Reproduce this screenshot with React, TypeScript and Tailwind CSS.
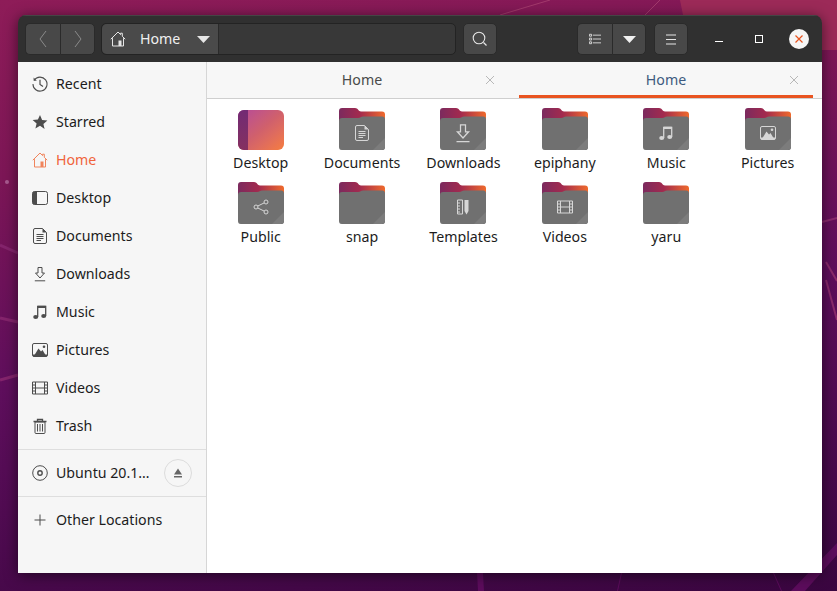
import React from "react";

const S = ({ size = 16, children, className = "" }: { size?: number; children: React.ReactNode; className?: string }) => (
  <svg width={size} height={size} viewBox="0 0 16 16" fill="none" className={`shrink-0 ${className}`}>{children}</svg>
);

const HomeIcon = ({ c }: { c: string }) => (
  <S><path d="M.8 8.2 8 1l2.6 2.6V2.2h1.7v3.1l2.9 2.9M2.5 7.2v7.8h11V7.2" stroke={c} strokeWidth="1" /><path d="M8.5 9.5h3V15h-3z" fill={c} /></S>
);
const RecentIcon = () => (
  <S><path d="M2.2 4.2A7 7 0 1 1 1 8" stroke="#4d4d4d" strokeWidth="1.1" /><path d="M1.6 1.6v3.2h3.2" fill="#4d4d4d" /><path d="M8 3.8V8.4l3 2.2" stroke="#4d4d4d" strokeWidth="1.2" /></S>
);
const StarIcon = () => (
  <S><path d="m8 1 2.1 4.9 5.3.5-4 3.5 1.2 5.2L8 11.8l-4.6 2.8 1.2-5.2-4-3.5 5.3-.5z" fill="#4d4d4d" /></S>
);
const DesktopIcon = () => (
  <S><rect x=".5" y="1.5" width="15" height="13" rx="2" stroke="#4d4d4d" /><path d="M2.5 1.5H5v13H2.5a2 2 0 0 1-2-2v-9a2 2 0 0 1 2-2z" fill="#4d4d4d" /></S>
);
const DocIcon = ({ c = "#4d4d4d" }: { c?: string }) => (
  <S><path d="M1.500 2A1.500 1.500 0 0 1 3 .5h7.500l4 4V14a1.500 1.500 0 0 1-1.500 1.500H3A1.500 1.500 0 0 1 1.500 14z" stroke={c} /><path d="M4.500 6.500h7M4.500 8.500h7M4.500 10.500h7M4.500 12.500h4.500" stroke={c} /><path d="M10.500 .5v4h4" fill={c} /></S>
);
const DownIcon = ({ c = "#4d4d4d", size = 16 }: { c?: string; size?: number }) => (
  <S size={size}><path d="M6 1.500h4V7h2.500L8 12 3.500 7H6z" stroke={c} /><path d="M2.800 14.800h10.400" stroke={c} /></S>
);
const MusicIcon = ({ c = "#4d4d4d" }: { c?: string }) => (
  <S><path d="M5.700 13V2.500h8V12" stroke={c} strokeWidth="1.300" /><path d="M5.700 1.800h8V4h-8z" fill={c} /><ellipse cx="3.700" cy="13" rx="2.500" ry="2" fill={c} /><ellipse cx="11.700" cy="12" rx="2.500" ry="2" fill={c} /></S>
);
const PicIcon = ({ c = "#4d4d4d" }: { c?: string }) => (
  <S><rect x=".5" y="1.500" width="15" height="13" rx="1.500" stroke={c} /><path d="M2.500 13 6.500 6.500l2.500 3 1.500-1.500 3 5z" fill={c} /><circle cx="12" cy="4.800" r="1.300" fill={c} /><path d="M1 12.500h14V14.500H1z" fill={c} /></S>
);
const FilmIcon = ({ c = "#4d4d4d" }: { c?: string }) => (
  <S><path d="M.5 2h15v12H.5zM3.500 2v12M12.500 2v12M3.500 8h9M.5 5h3M.5 8h3M.5 11h3M12.500 5h3M12.500 8h3M12.500 11h3" stroke={c} /></S>
);
const TrashIcon = () => (
  <S><path d="M1.500 3.500h13M5.500 3.500V1.500h5v2" stroke="#4d4d4d" strokeWidth="1.300" /><path d="M3 4h10v10.500a1 1 0 0 1-1 1H4a1 1 0 0 1-1-1z" stroke="#4d4d4d" /><path d="M5.500 6v7.500M8 6v7.500M10.500 6v7.500" stroke="#4d4d4d" /></S>
);
const DiscIcon = () => (
  <S><circle cx="8" cy="8" r="7.300" stroke="#4d4d4d" /><circle cx="8" cy="8" r="2.200" stroke="#4d4d4d" strokeWidth="1.400" /></S>
);
const PlusIcon = () => (
  <S><path d="M8 2.500v11M2.500 8h11" stroke="#4d4d4d" /></S>
);
const ShareIcon = () => (
  <S><circle cx="3" cy="8" r="2" stroke="#d6d6d6" /><circle cx="13" cy="3" r="2" stroke="#d6d6d6" /><circle cx="13" cy="13" r="2" stroke="#d6d6d6" /><path d="m4.800 7 6.400-3.100M4.800 9l6.400 3.100" stroke="#d6d6d6" /></S>
);
const TemplIcon = () => (
  <S><path d="M2.500 1h5v14h-5zM2.500 4H5M2.500 7H5M2.500 10H5M2.500 13H5" stroke="#d6d6d6" /><path d="M9.500 1h4v11l-2 3.500-2-3.500z" fill="#d6d6d6" /></S>
);

const sidebar: { n: string; i: React.ReactNode; active?: boolean }[] = [
  { n: "Recent", i: <RecentIcon /> },
  { n: "Starred", i: <StarIcon /> },
  { n: "Home", i: <HomeIcon c="#f0845c" />, active: true },
  { n: "Desktop", i: <DesktopIcon /> },
  { n: "Documents", i: <DocIcon /> },
  { n: "Downloads", i: <DownIcon /> },
  { n: "Music", i: <MusicIcon /> },
  { n: "Pictures", i: <PicIcon /> },
  { n: "Videos", i: <FilmIcon /> },
  { n: "Trash", i: <TrashIcon /> },
];

const Folder = ({ id, glyph, tall }: { id: string; glyph?: React.ReactNode; tall?: boolean }) => (
  <div className="relative h-[42px] w-[46px]">
    <svg width="46" height="42" viewBox="0 0 46 42" className="block">
      <defs>
        <linearGradient id={id} x1="0" y1="0" x2="1" y2="0">
          <stop offset="0" stopColor="#7b2a5e" />
          <stop offset="0.45" stopColor="#a32a4e" />
          <stop offset="1" stopColor="#ef6a2c" />
        </linearGradient>
      </defs>
      <path d="M0 20V3a3 3 0 0 1 3-3h13c3 0 3.500 3.500 6 3.500H43a3 3 0 0 1 3 3V20z" fill={`url(#${id})`} />
      <path d="M0 39V13a3 3 0 0 1 3-3h16c2.500 0 3-1.500 5-1.500h19a3 3 0 0 1 3 3V39a3 3 0 0 1-3 3H3a3 3 0 0 1-3-3z" fill="#707070" />
      <path d="M46 30 34 42h9a3 3 0 0 0 3-3z" fill="#7c7c7c" />
      <path d="M0 39a3 3 0 0 0 3 3h40a3 3 0 0 0 3-3v.500a2.500 2.500 0 0 1-3 2.500H3a2.500 2.500 0 0 1-3-2.500z" fill="#5c5c5c" />
    </svg>
    {glyph && <div className={`absolute inset-x-0 flex justify-center ${tall ? "top-[15px]" : "top-[17px]"}`}>{glyph}</div>}
  </div>
);

const DesktopFolder = () => (
  <div className="mt-[2px] flex h-[40px] w-[46px] overflow-hidden rounded-[6px] bg-gradient-to-br from-[#b5489a] via-[#d0606c] to-[#f67d3c]">
    <div className="h-full w-[10px] bg-gradient-to-b from-[#722a74] to-[#853060]" />
  </div>
);

const g = "#d6d6d6";
const files: { n: string; glyph?: React.ReactNode; desktop?: boolean; tall?: boolean }[] = [
  { n: "Desktop", desktop: true },
  { n: "Documents", glyph: <DocIcon c={g} /> },
  { n: "Downloads", glyph: <DownIcon c={g} size={20} />, tall: true },
  { n: "epiphany" },
  { n: "Music", glyph: <MusicIcon c={g} /> },
  { n: "Pictures", glyph: <PicIcon c={g} /> },
  { n: "Public", glyph: <ShareIcon /> },
  { n: "snap" },
  { n: "Templates", glyph: <TemplIcon /> },
  { n: "Videos", glyph: <FilmIcon c={g} /> },
  { n: "yaru" },
];

const Tab = ({ active }: { active?: boolean }) => (
  <div className={`relative flex h-[36px] w-[294px] items-center justify-center ${active ? "border-b-[3px] border-[#e95420] pt-[3px]" : ""}`}>
    <span className={`text-[14.2px] ${active ? "text-[#3d5a80]" : "text-[#4a4a4a]"}`}>Home</span>
    <svg width="10" height="10" viewBox="0 0 10 10" className="absolute right-[14px] top-[13px]">
      <path d="m1 1 8 8M9 1 1 9" stroke="#b8b8b8" />
    </svg>
  </div>
);

const btn = "flex h-[32px] items-center justify-center border border-[#2a2a2a] bg-[#484848]";

export default function App() {
  return (
    <div
      className="relative h-[591px] w-[837px] overflow-hidden bg-[linear-gradient(172deg,#8e1c58_0%,#7c1656_25%,#5e0e5c_55%,#3a0640_100%)] pl-[18px] pt-[15px]"
      style={{ fontFamily: '"Noto Sans", sans-serif' }}
    >
      <svg width="837" height="591" viewBox="0 0 837 591" className="absolute inset-0">
        <path d="M680 0h157v50H690z" fill="#9c2a58" />
        <path d="M620 40 660 0M500 15 550 0" stroke="#a23a6c" />
        <path d="M0 245 18 253M0 318 18 322M0 380 18 375" stroke="#84246c" strokeWidth="3" />
        <circle cx="7" cy="182" r="2" fill="#a85a90" />
        <path d="M477 573h6l1 18h-6zM621 573h1l-4 18h-1zM773 573h1l8 18h-1zM837 543v12l-32 36h-14z" fill="#5c0c5c" />
        <path d="M822 222 837 218M826 262 837 281M826 280 837 320" stroke="#8a2a6c" strokeWidth="2" />
      </svg>
      <div className="relative flex h-[558px] w-[804px] flex-col overflow-hidden rounded-t-[8px] shadow-[0_2px_14px_rgba(0,0,0,0.55)]">
        <header className="flex h-[47px] items-center border-t border-[#454545] bg-[#303030] pl-[7px]">
          <div className="flex">
            <div className={`${btn} w-[35px] rounded-l-[5px] border-r-0`}>
              <svg width="10" height="18" viewBox="0 0 10 18"><path d="M8 1 2 9l6 8" stroke="#8a8a8a" fill="none" /></svg>
            </div>
            <div className={`${btn} w-[35px] rounded-r-[5px]`}>
              <svg width="10" height="18" viewBox="0 0 10 18"><path d="m2 1 6 8-6 8" stroke="#8a8a8a" fill="none" /></svg>
            </div>
          </div>
          <div className="ml-[6px] flex h-[32px] w-[355px] rounded-[5px] border border-[#232323] bg-[#383838]">
            <div className="flex w-[117px] items-center rounded-l-[5px] border-r border-[#2a2a2a] bg-[#4a4a4a] pl-[8px]">
              <HomeIcon c="#e6e6e6" />
              <span className="ml-[14px] text-[14.2px] text-[#f0f0f0]">Home</span>
              <svg width="13" height="7" viewBox="0 0 13 7" className="ml-[17px]"><path d="M0 0h13L6.500 7z" fill="#e6e6e6" /></svg>
            </div>
          </div>
          <div className={`${btn} ml-[7px] w-[34px] rounded-[5px]`}>
            <svg width="16" height="16" viewBox="0 0 16 16" fill="none"><circle cx="7" cy="7" r="5.800" stroke="#e6e6e6" strokeWidth="1.100" /><path d="m11.500 11.500 3 3" stroke="#e6e6e6" strokeWidth="1.300" /></svg>
          </div>
          <div className="ml-[80px] flex">
            <div className={`${btn} w-[35px] rounded-l-[5px] border-r-0`}>
              <svg width="12" height="12" viewBox="0 0 14 12" fill="none"><path d="M4.500 1.500H14M4.500 6H14M4.500 10.500H14" stroke="#e6e6e6" /><path d="M.5.500h2.500v2.200H.5zM.5 5h2.500v2.200H.5zM.5 9.300h2.500v2.200H.5z" stroke="#e6e6e6" /></svg>
            </div>
            <div className={`${btn} w-[34px] rounded-r-[5px]`}>
              <svg width="13" height="7" viewBox="0 0 13 7"><path d="M0 0h13L6.500 7z" fill="#f0f0f0" /></svg>
            </div>
          </div>
          <div className={`${btn} ml-[8px] w-[34px] rounded-[5px]`}>
            <svg width="12" height="11" viewBox="0 0 12 11"><path d="M1 1h10M1 5.500h10M1 10h10" stroke="#e6e6e6" /></svg>
          </div>
          <div className="ml-[21px] flex w-[20px] justify-center">
            <div className="mt-[4px] h-px w-[8px] bg-white" />
          </div>
          <div className="ml-[20px] flex w-[20px] justify-center">
            <div className="h-[8px] w-[8px] border border-white" />
          </div>
          <div className="ml-[20px] flex h-[20px] w-[20px] items-center justify-center rounded-full bg-[#f6f6f6]">
            <svg width="8" height="8" viewBox="0 0 8 8"><path d="m.5.500 7 7M7.500.500l-7 7" stroke="#e95420" strokeWidth="1.200" /></svg>
          </div>
        </header>
        <div className="flex min-h-0 flex-1">
          <aside className="flex w-[189px] shrink-0 flex-col border-r border-[#d6d6d6] bg-[#f6f6f6] pt-[3px] text-[14.2px] text-[#1c1c1c]">
            {sidebar.map((s) => (
              <div key={s.n} className="flex h-[38px] items-center pl-[14px]">
                {s.i}
                <span className={`ml-[8px] ${s.active ? "text-[#f0643c]" : ""}`}>{s.n}</span>
              </div>
            ))}
            <div className="mt-[4px] flex h-[48px] items-center border-y border-[#dedede] pl-[14px]">
              <DiscIcon />
              <span className="ml-[8px] w-[95px] whitespace-nowrap">Ubuntu 20.1…</span>
              <div className="ml-[13px] flex h-[28px] w-[28px] items-center justify-center rounded-full border border-[#dcdcdc]">
                <svg width="10" height="10" viewBox="0 0 10 10"><path d="M5 .500 9 6.500H1zM1 8h8v1.500H1z" fill="#666" /></svg>
              </div>
            </div>
            <div className="flex h-[46px] items-center pl-[14px]">
              <PlusIcon />
              <span className="ml-[8px]">Other Locations</span>
            </div>
          </aside>
          <main className="flex min-w-0 flex-1 flex-col bg-white">
            <div className="flex h-[37px] gap-[10px] border-b border-[#cfcfcf] bg-[#f7f7f7] pl-[8px]">
              <Tab />
              <Tab active />
            </div>
            <div className="grid grid-cols-[repeat(6,101.4px)] grid-rows-[74px_74px] pl-[3px] pt-[9px]">
              {files.map((f, i) => (
                <div key={f.n} className="flex flex-col items-center">
                  {f.desktop ? <DesktopFolder /> : <Folder id={`f${i}`} glyph={f.glyph} tall={f.tall} />}
                  <span className="mt-[3px] text-[14.2px] leading-[20px] text-[#1c1c1c]">{f.n}</span>
                </div>
              ))}
            </div>
          </main>
        </div>
      </div>
    </div>
  );
}
